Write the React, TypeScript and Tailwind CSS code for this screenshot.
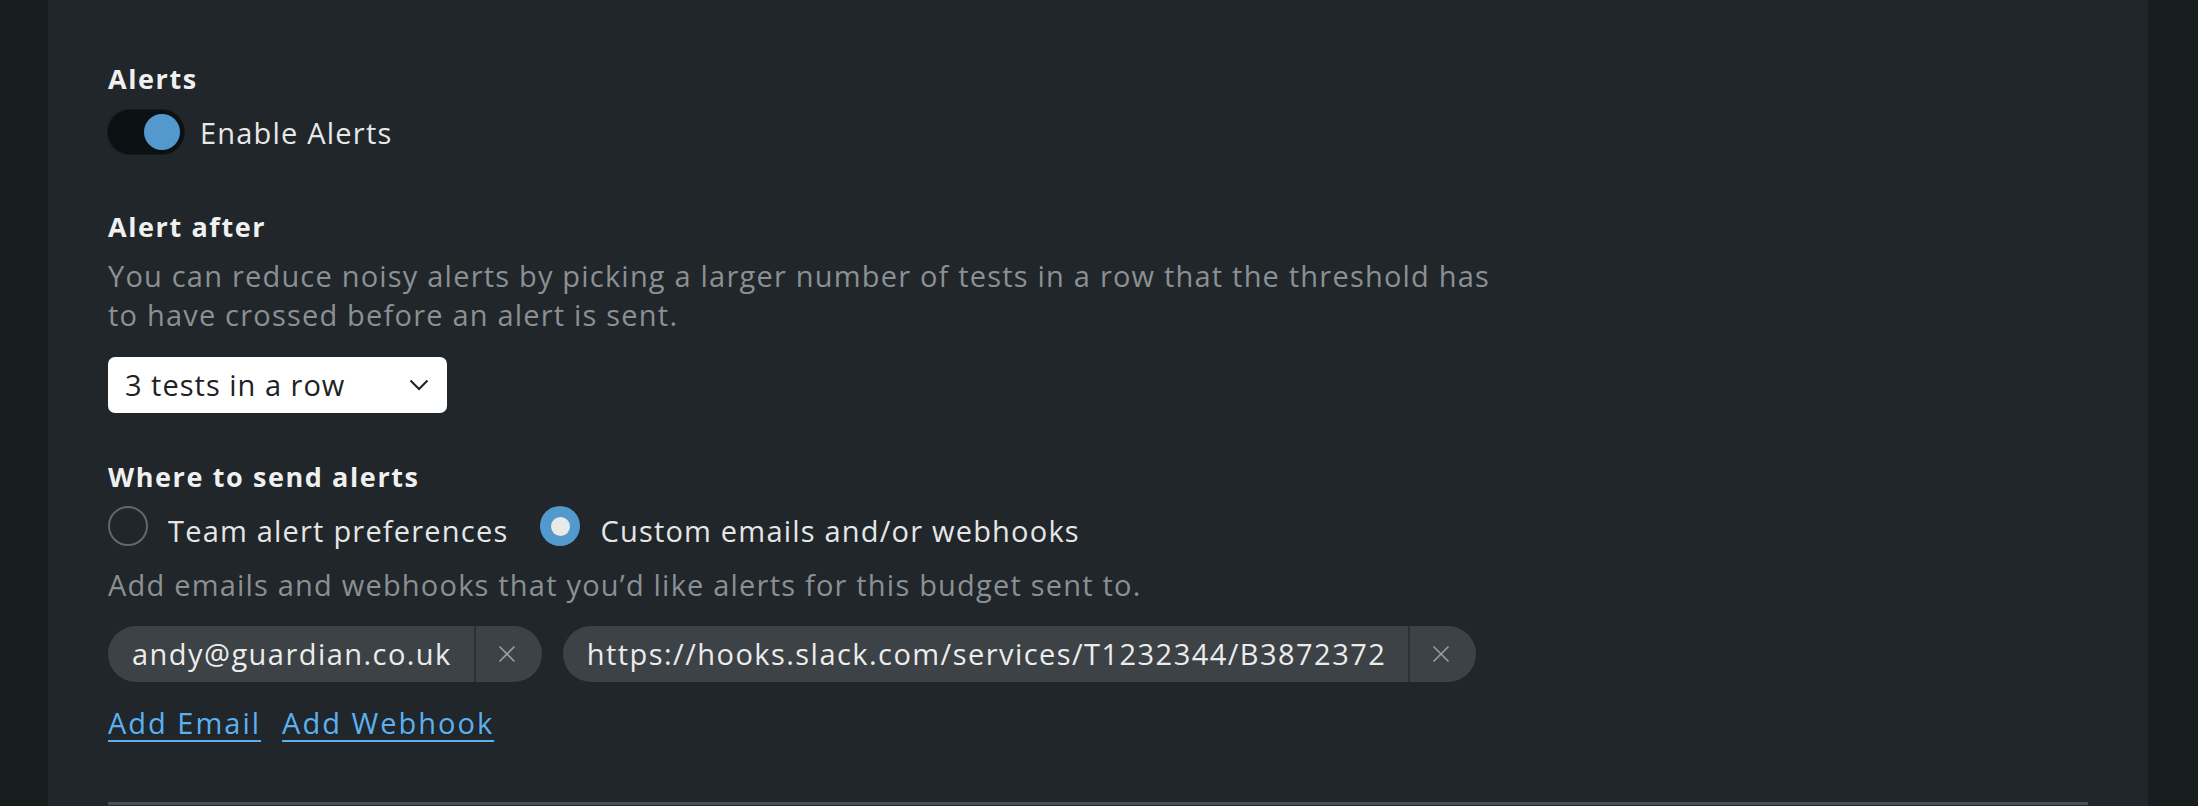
import React, { useState } from "react";

const font = "font-['Open_Sans',_'Noto_Sans',_sans-serif]";

function Heading({ children, className = "" }: { children: React.ReactNode; className?: string }) {
  return (
    <h3 className={`text-[27px] leading-[32px] font-bold tracking-[1.6px] text-[#f0f0f0] ${className}`}>
      {children}
    </h3>
  );
}

function Toggle({ on, onChange }: { on: boolean; onChange: () => void }) {
  return (
    <button
      onClick={onChange}
      className="flex h-[44px] w-[76px] items-center rounded-full bg-[#0b1013] px-[4px] shadow-[0_0_0_1px_#15191c]"
    >
      <span
        className={`h-[36px] w-[36px] rounded-full transition-all ${
          on ? "ml-auto bg-[#5399cd]" : "bg-[#6b7074]"
        }`}
      />
    </button>
  );
}

function Radio({ checked, label, onClick }: { checked: boolean; label: string; onClick: () => void }) {
  return (
    <label className="flex cursor-pointer items-center gap-[20px]" onClick={onClick}>
      {checked ? (
        <span className="flex h-[40px] w-[40px] items-center justify-center rounded-full bg-[#5399cd]">
          <span className="h-[19px] w-[19px] rounded-full bg-[#e9e9e9]" />
        </span>
      ) : (
        <span className="h-[40px] w-[40px] rounded-full border-2 border-[#62676b]" />
      )}
      <span className="translate-y-[4px] text-[29px] leading-[37px] text-[#e6e6e6]">{label}</span>
    </label>
  );
}

function Chip({ value }: { value: string }) {
  return (
    <div className="flex h-[56px] items-stretch rounded-full bg-[#3d4246]">
      <span className="flex items-center pl-[24px] pr-[22px] text-[29px] tracking-[1.45px] text-[#ececec]">
        {value}
      </span>
      <span className="w-[2px] bg-[#2c3134]" />
      <button className="flex w-[66px] items-center justify-center pr-[4px]">
        <svg width="18" height="18" viewBox="0 0 18 18" fill="none" stroke="#9a9ea1" strokeWidth="1.6">
          <line x1="1.5" y1="1.5" x2="16.5" y2="16.5" />
          <line x1="16.5" y1="1.5" x2="1.5" y2="16.5" />
        </svg>
      </button>
    </div>
  );
}

export default function App() {
  const [enabled, setEnabled] = useState(true);
  const [target, setTarget] = useState<"team" | "custom">("custom");

  return (
    <div className={`flex h-[806px] w-full overflow-hidden bg-[#181d20] ${font} tracking-[1.2px]`}>
      <div className="w-[48px] shrink-0" />
      <div className="w-[2100px] shrink-0 bg-[#20262a] px-[60px] pt-[63px]">
        <Heading>Alerts</Heading>
        <div className="mt-[15px] flex items-center gap-[16px]">
          <Toggle on={enabled} onChange={() => setEnabled(!enabled)} />
          <span className="text-[29px] leading-[37px] text-[#e8e8e8]">Enable Alerts</span>
        </div>

        <Heading className="mt-[57px]">Alert after</Heading>
        <p className="mt-[13px] max-w-[1410px] text-[29px] leading-[39px] text-[#8b9093]">
          You can reduce noisy alerts by picking a larger number of tests in a row that the threshold has
          to have crossed before an alert is sent.
        </p>
        <button className="mt-[23px] flex h-[56px] w-[339px] items-center justify-between rounded-[7px] bg-white pl-[17px] pr-[18px]">
          <span className="text-[29px] tracking-[1px] text-[#1e2225]">3 tests in a row</span>
          <svg width="20" height="12" viewBox="0 0 20 12" fill="none" stroke="#1e2225" strokeWidth="2">
            <polyline points="1.5,1.5 10,10 18.5,1.5" />
          </svg>
        </button>

        <Heading className="mt-[48px]">Where to send alerts</Heading>
        <div className="mt-[13px] flex items-center gap-[32px]">
          <Radio checked={target === "team"} label="Team alert preferences" onClick={() => setTarget("team")} />
          <Radio
            checked={target === "custom"}
            label="Custom emails and/or webhooks"
            onClick={() => setTarget("custom")}
          />
        </div>
        <p className="mt-[20px] text-[29px] leading-[37px] text-[#8b9093]">
          Add emails and webhooks that you’d like alerts for this budget sent to.
        </p>
        <div className="mt-[23px] flex gap-[21px]">
          <Chip value="andy@guardian.co.uk" />
          <Chip value="https://hooks.slack.com/services/T1232344/B3872372" />
        </div>
        <div className="mt-[22px] flex gap-[21px] text-[29px] leading-[37px] tracking-[2px] text-[#5cb0ef]">
          <a href="#" className="underline underline-offset-[6px] decoration-[1.5px]">
            Add Email
          </a>
          <a href="#" className="underline underline-offset-[6px] decoration-[1.5px]">
            Add Webhook
          </a>
        </div>
        <div className="mt-[61px] h-[3px] bg-[#4b4f53]" />
      </div>
      <div className="flex-1" />
    </div>
  );
}
